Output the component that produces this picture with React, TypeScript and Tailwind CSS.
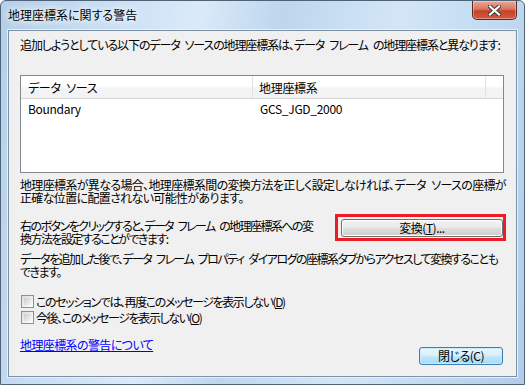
import React from "react";

const jp = "font-['Noto_Sans_CJK_JP',sans-serif] [font-feature-settings:'palt']";
const sp = "\u2002";

const CloseX: React.FC = () => (
  <svg width="13" height="11" viewBox="0 0 13 11">
    <path d="M2 1.5 L11 9.5 M11 1.5 L2 9.5" stroke="#3b3b3b" strokeWidth="4.2" strokeLinecap="square" />
    <path d="M2 1.5 L11 9.5 M11 1.5 L2 9.5" stroke="#ffffff" strokeWidth="2.2" strokeLinecap="square" />
  </svg>
);

const Checkbox: React.FC<{ label: string; keyChar: string }> = ({ label, keyChar }) => (
  <div className="flex h-[16px] items-center">
    <div className="ml-[1px] h-[13px] w-[13px] shrink-0 border border-[#8f8f8f] bg-[linear-gradient(135deg,#dcdcdc,#ffffff)] p-[2px]">
      <div className="h-full w-full bg-[linear-gradient(135deg,#cbcfd5,#f4f4f4)]" />
    </div>
    <span className="ml-[2px] leading-[13px] tracking-[-1.4px]">
      {label}(<span className="underline">{keyChar}</span>)
    </span>
  </div>
);

export default function App() {
  return (
    <div className={`h-[385px] w-[525px] overflow-hidden bg-white text-[12px] text-black ${jp}`}>
      <div className="flex h-full w-full flex-col rounded-t-[6px] border border-[#4f6378] bg-[linear-gradient(100deg,#b4cfe9_0%,#cde2f5_22%,#dbeaf8_34%,#bdd6ee_48%,#d3e6f6_68%,#c2dbf1_84%,#b0cce8_100%)]">
        {/* title bar */}
        <div className="flex h-[29px] shrink-0 items-start justify-between pl-[7px] pr-[7px]">
          <span className="pt-[6px] leading-[16px] [text-shadow:0_0_6px_#ffffff,0_0_10px_#ffffff]">
            地理座標系に関する警告
          </span>
          <button className="flex h-[19px] w-[45px] items-center justify-center rounded-b-[5px] border border-t-0 border-[#5a2a22] bg-[linear-gradient(180deg,#e9a99a_0%,#d9765f_45%,#c5432c_55%,#d35a3f_100%)] shadow-[inset_0_0_0_1px_rgba(255,255,255,0.35)]">
            <CloseX />
          </button>
        </div>

        {/* client area */}
        <div className="mx-[7px] h-[347px] shrink-0 whitespace-nowrap border border-[#7d90a6] bg-[#f0f0f0] pl-[11px] pr-[12px] shadow-[0_0_0_1px_#e6f0fa]">
          <p className="mt-[7px] leading-[13px] tracking-[-1.1px]">
            追加しようとしている以下のデータ{sp}ソースの地理座標系は、データ{sp}フレーム{sp}の地理座標系と異なります:
          </p>

          {/* list */}
          <div className="mt-[24px] h-[98px] w-[484px] border border-[#828790] bg-white tracking-[-0.3px]">
            <div className="flex h-[23px] border-b border-[#d5d5d5] bg-[linear-gradient(180deg,#ffffff_0%,#ffffff_45%,#f3f4f6_55%,#f1f2f4_100%)]">
              <div className="flex w-[232px] items-center border-r border-[#e3e3e3] pl-[7px] pt-[2px]">データ{sp}ソース</div>
              <div className="flex w-[233px] items-center border-r border-[#e3e3e3] pl-[6px] pt-[2px]">地理座標系</div>
              <div className="flex-1" />
            </div>
            <div className="flex h-[19px] items-center">
              <div className="w-[233px] pl-[7px]">Boundary</div>
              <div className="pl-[6px]">GCS_JGD_2000</div>
            </div>
          </div>

          <p className="mt-[5px] leading-[13px] tracking-[-0.65px]">
            地理座標系が異なる場合、地理座標系間の変換方法を正しく設定しなければ、データ{sp}ソースの座標が
            <br />
            正確な位置に配置されない可能性があります。
          </p>

          <div className="mt-[10px] flex items-start justify-between">
            <p className="mt-[5px] leading-[13px] tracking-[-1.55px]">
              右のボタンをクリックすると、データ{sp}フレーム{sp}の地理座標系への変
              <br />
              換方法を設定することができます:
            </p>
            <div className="mr-[-2px] shrink-0 border-[3px] border-[#ed1c24] pb-[1px] pl-[3px] pt-[2px]">
              <button className="flex h-[18px] w-[162px] items-center justify-center rounded-[3px] border border-[#707070] bg-[linear-gradient(180deg,#f2f2f2_0%,#ebebeb_45%,#dddddd_55%,#cfcfcf_100%)] tracking-[-0.5px] shadow-[inset_0_0_0_1px_#fcfcfc]">
                変換(<span className="underline">T</span>)...
              </button>
            </div>
          </div>

          <p className="mt-[7px] leading-[13px] tracking-[-1.5px]">
            データを追加した後で、データ{sp}フレーム{sp}プロパティ{sp}ダイアログの座標系タブからアクセスして変換することも
            <br />
            できます。
          </p>

          <div className="mt-[15px] flex flex-col">
            <Checkbox label="このセッションでは、再度このメッセージを表示しない" keyChar="D" />
            <Checkbox label="今後、このメッセージを表示しない" keyChar="O" />
          </div>

          <div className="mt-[13px] flex items-start justify-between">
            <a href="#" className="leading-[13px] tracking-[-0.6px] text-[#0000ff] underline">
              地理座標系の警告について
            </a>
            <button className="mr-[1px] mt-[9px] flex h-[18px] w-[84px] items-center justify-center rounded-[3px] border border-[#3c7fb1] bg-[linear-gradient(180deg,#eaf6fd_0%,#d9f0fc_45%,#bee6fd_55%,#a7d9f5_100%)] tracking-[-0.5px] shadow-[inset_0_0_0_1px_#c9eafc]">
              閉じる(C)
            </button>
          </div>
        </div>
      </div>
    </div>
  );
}
